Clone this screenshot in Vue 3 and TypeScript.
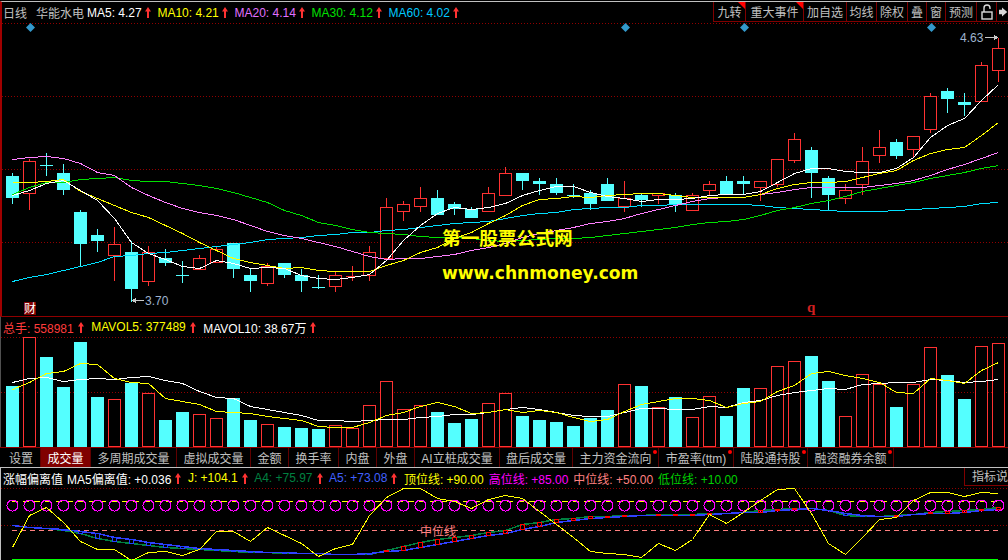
<script setup lang="ts">
type Candle = [kind: 'c' | 'r', hi: number, top: number, bot: number, lo: number]

interface Legend {
  label: string
  value: string
  color: string
}

const candles: Candle[] = [
  ['c', 173, 176, 198, 204], ['r', 159, 161, 193, 210], ['c', 153, 165, 165, 176], ['c', 164, 173, 190, 195],
  ['c', 210, 212, 244, 266], ['c', 229, 235, 241, 252], ['r', 227, 244, 255, 281], ['c', 241, 252, 289, 302],
  ['r', 246, 252, 281, 286], ['c', 249, 258, 263, 266], ['c', 261, 275, 275, 283], ['r', 255, 258, 269, 269],
  ['r', 246, 249, 262, 262], ['c', 243, 243, 269, 278], ['c', 269, 275, 281, 292], ['r', 263, 266, 283, 286],
  ['c', 263, 263, 275, 278], ['c', 269, 275, 281, 292], ['c', 275, 287, 287, 289], ['r', 272, 275, 286, 292],
  ['r', 266, 276, 276, 281], ['r', 246, 252, 275, 281], ['r', 198, 207, 258, 258], ['r', 201, 204, 211, 221],
  ['r', 187, 198, 206, 212], ['c', 190, 198, 215, 215], ['c', 202, 204, 209, 215], ['c', 207, 209, 218, 218],
  ['r', 187, 193, 211, 211], ['r', 167, 173, 195, 195], ['c', 173, 173, 181, 190], ['c', 178, 181, 184, 195],
  ['c', 178, 184, 193, 195], ['c', 184, 195, 195, 198], ['c', 190, 193, 204, 210], ['c', 178, 184, 201, 201],
  ['r', 181, 198, 206, 212], ['c', 193, 195, 200, 207], ['r', 193, 193, 195, 204], ['c', 193, 195, 205, 212],
  ['r', 193, 195, 210, 210], ['r', 181, 184, 190, 195], ['c', 176, 181, 194, 194], ['c', 176, 181, 184, 195],
  ['r', 181, 181, 187, 201], ['r', 159, 159, 184, 187], ['r', 133, 139, 160, 163], ['c', 147, 150, 173, 198],
  ['c', 176, 178, 195, 210], ['r', 184, 190, 198, 204], ['r', 147, 161, 184, 195], ['r', 130, 147, 155, 163],
  ['c', 139, 142, 156, 159], ['r', 136, 136, 149, 158], ['r', 93, 96, 129, 133], ['c', 88, 91, 99, 113],
  ['c', 93, 102, 105, 116], ['r', 62, 65, 101, 101], ['r', 38, 48, 70, 82]
]

const volumes = [
  386, 337, 357, 387, 342, 397, 399, 383, 393, 420, 412, 414, 418, 398, 420, 424, 427, 428, 429, 425,
  428, 405, 381, 409, 405, 412, 423, 419, 403, 393, 416, 420, 422, 426, 418, 410, 384, 386, 407, 397,
  417, 396, 416, 388, 388, 366, 361, 356, 381, 416, 374, 384, 407, 384, 347, 375, 399, 346, 343
]

const mainLines = [
  { color: '#00e0ff', ys: [281, 277, 274, 270, 266, 262, 256, 255, 253, 252, 250, 248, 246, 244, 242, 239, 238, 237, 235, 234, 232, 232, 230, 229, 227, 225, 223, 222, 221, 218, 215, 213, 212, 209, 208, 207, 207, 205, 205, 204, 204, 204, 204, 204, 205, 207, 208, 209, 210, 211, 211, 211, 210, 209, 208, 207, 206, 203, 202] },
  { color: '#00e000', ys: [194, 187, 182, 182, 179, 178, 177, 180, 181, 181, 183, 185, 188, 192, 197, 202, 210, 215, 222, 225, 229, 232, 233, 234, 236, 237, 237, 238, 240, 241, 240, 239, 238, 238, 237, 235, 233, 231, 229, 227, 224, 222, 221, 219, 215, 210, 207, 203, 200, 196, 191, 188, 185, 182, 178, 175, 172, 168, 165] },
  { color: '#ff80ff', ys: [159, 157, 156, 158, 163, 172, 175, 187, 195, 202, 208, 212, 215, 219, 225, 231, 235, 238, 242, 246, 251, 256, 259, 258, 258, 256, 254, 250, 247, 243, 237, 233, 230, 227, 223, 221, 218, 213, 209, 205, 201, 198, 197, 197, 194, 192, 189, 187, 187, 187, 187, 185, 183, 180, 175, 169, 164, 158, 152] },
  { color: '#ffff00', ys: [182, 182, 181, 179, 191, 198, 205, 212, 217, 225, 233, 242, 250, 258, 262, 265, 268, 267, 270, 271, 271, 271, 265, 260, 252, 247, 238, 232, 223, 215, 205, 199, 198, 196, 197, 195, 194, 193, 193, 195, 197, 197, 197, 197, 194, 188, 184, 182, 182, 181, 177, 173, 170, 160, 153, 149, 147, 135, 122] },
  { color: '#ffffff', ys: [195, 190, 183, 180, 190, 200, 218, 242, 253, 259, 266, 268, 260, 263, 268, 267, 268, 275, 278, 279, 277, 274, 260, 240, 225, 213, 207, 209, 207, 203, 195, 190, 186, 186, 192, 196, 198, 201, 199, 199, 198, 195, 194, 194, 191, 182, 173, 168, 168, 171, 172, 172, 168, 157, 137, 125, 118, 100, 84] }
]

const volWhite = [382, 378, 377, 381, 379, 378, 379, 377, 376, 380, 383, 391, 397, 398, 406, 409, 412, 415, 420, 420, 421, 420, 419, 419, 417, 416, 414, 414, 412, 409, 407, 409, 412, 415, 416, 416, 412, 408, 408, 409, 409, 406, 407, 402, 400, 395, 392, 390, 388, 389, 384, 383, 382, 382, 379, 380, 382, 381, 379]
const volYellow = [389, 382, 373, 371, 363, 364, 378, 382, 383, 398, 401, 404, 411, 412, 413, 416, 418, 420, 426, 427, 427, 422, 415, 412, 406, 402, 406, 413, 412, 409, 412, 410, 412, 417, 421, 419, 411, 404, 401, 398, 398, 400, 407, 403, 401, 391, 385, 373, 371, 375, 378, 382, 392, 393, 378, 380, 383, 370, 362]

const jLine = [547, 515, 507, 522, 541, 549, 549, 560, 552, 551, 555, 549, 531, 531, 541, 527, 535, 543, 556, 548, 544, 515, 497, 488, 488, 498, 501, 508, 499, 495, 498, 511, 524, 537, 551, 553, 554, 557, 543, 550, 539, 514, 523, 512, 500, 489, 488, 513, 543, 554, 537, 519, 517, 500, 492, 492, 496, 492, 493]
const a4Line = [525, 527, 528, 530, 533, 538, 541, 543, 545, 547, 548, 549, 550, 551, 552, 552, 553, 553, 553, 554, 554, 554, 550, 546, 542, 539, 537, 535, 532, 530, 524, 522, 519, 518, 516, 516, 515, 515, 514, 514, 514, 513, 513, 512, 510, 509, 508, 508, 510, 515, 516, 516, 515, 514, 512, 511, 510, 509, 507]
const a5Line = [525, 527, 528, 529, 531, 533, 537, 539, 542, 544, 546, 548, 549, 550, 551, 552, 552, 553, 553, 554, 554, 553, 551, 550, 547, 544, 541, 538, 535, 533, 529, 526, 522, 520, 518, 517, 516, 515, 515, 515, 515, 514, 513, 512, 512, 510, 509, 508, 510, 513, 515, 516, 516, 514, 513, 513, 512, 510, 509]

const diamonds = [30.5, 625.5, 744.5, 931.5]

const mainLegend: Legend[] = [
  { label: 'MA5:', value: '4.27', color: '#ffffff' },
  { label: 'MA10:', value: '4.21', color: '#ffff00' },
  { label: 'MA20:', value: '4.14', color: '#e070ff' },
  { label: 'MA30:', value: '4.12', color: '#00e000' },
  { label: 'MA60:', value: '4.02', color: '#00c8ff' }
]

const volLegend: Legend[] = [
  { label: '总手:', value: '558981', color: '#ff3c3c' },
  { label: 'MAVOL5:', value: '377489', color: '#ffff00' },
  { label: 'MAVOL10:', value: '38.67万', color: '#ffffff' }
]

const indicatorLegend: Legend[] = [
  { label: 'MA5偏离值:', value: '+0.036', color: '#ffffff' },
  { label: 'J:', value: '+104.1', color: '#ffff00' },
  { label: 'A4:', value: '+75.97', color: '#008040' },
  { label: 'A5:', value: '+73.08', color: '#4060ff' }
]

const indicatorPlain: Legend[] = [
  { label: '顶位线:', value: '+90.00', color: '#ffff00' },
  { label: '高位线:', value: '+85.00', color: '#ff00ff' },
  { label: '中位线:', value: '+50.00', color: '#ff8080' },
  { label: '低位线:', value: '+10.00', color: '#00d000' }
]

const tools = [
  { text: '九转', width: 32, flag: true },
  { text: '重大事件', width: 58, flag: true },
  { text: '加自选', width: 43 },
  { text: '均线', width: 30 },
  { text: '除权', width: 31 },
  { text: '叠', width: 19 },
  { text: '窗', width: 19 },
  { text: '预测', width: 31 }
]

const tabs = [
  { text: '设置', width: 39 },
  { text: '成交量', width: 50, active: true },
  { text: '多周期成交量', width: 86 },
  { text: '虚拟成交量', width: 74 },
  { text: '金额', width: 38 },
  { text: '换手率', width: 50 },
  { text: '内盘', width: 38 },
  { text: '外盘', width: 38 },
  { text: 'AI立桩成交量', width: 85 },
  { text: '盘后成交量', width: 73 },
  { text: '主力资金流向', width: 86, dot: true },
  { text: '市盈率(ttm)', width: 75, dot: true },
  { text: '陆股通持股', width: 74, dot: true },
  { text: '融资融券余额', width: 86, dot: true }
]

function xAt(i: number): number {
  return 12.5 + 17 * i
}

function points(ys: number[]): string {
  return ys.map((y, i) => `${xAt(i)},${y + 0.5}`).join(' ')
}

function candleColor(kind: 'c' | 'r'): string {
  return kind === 'c' ? '#54ffff' : '#ff3232'
}
</script>

<template>
  <div class="screen">
    <section class="pane main-pane">
      <header class="legend-row main-head">
        <span class="title">日线</span>
        <span class="title name">华能水电</span>
        <span v-for="item in mainLegend" :key="item.label" class="legend-item" :style="{ color: item.color }">
          <span>{{ item.label }} {{ item.value }}</span>
          <svg class="up" width="6" height="11" viewBox="0 0 6 11"><path d="M3 0 6 4.500H4V11H2V4.500H0Z" /></svg>
        </span>
        <div class="tools">
          <div v-for="tool in tools" :key="tool.text" class="tool" :style="{ width: tool.width + 'px' }">
            {{ tool.text }}
            <i v-if="tool.flag" class="flag"></i>
          </div>
          <div class="tool lock">
            <svg width="12" height="16" viewBox="0 0 12 16" fill="none" stroke="#d8d8d8" stroke-width="1.4">
              <path d="M3 8V4a3 3 0 0 1 6 0v1" />
              <rect x="1" y="8" width="10" height="7" />
            </svg>
          </div>
          <div class="tool next">
            <svg width="12" height="14" viewBox="0 0 12 14"><path d="M0 4H4V1L11 7 4 13V10H0Z" fill="#d8d8d8" /></svg>
          </div>
        </div>
      </header>
      <svg class="chart" width="1006" height="293" viewBox="2 23 1006 293" shape-rendering="crispEdges">
        <line v-for="y in [23.5, 96.5, 169.5, 242.5]" :key="y" x1="2" x2="1008" :y1="y" :y2="y" class="grid" />
        <path
          v-for="x in diamonds"
          :key="x"
          :d="`M${x} 23l4.500 4.500-4.500 4.500-4.500-4.500Z`"
          fill="#3399cc"
          shape-rendering="auto"
        />
        <g v-for="(c, i) in candles" :key="i" :stroke="candleColor(c[0])">
          <line :x1="xAt(i)" :x2="xAt(i)" :y1="c[1]" :y2="c[4]" />
          <line v-if="c[2] === c[3]" :x1="xAt(i) - 6.5" :x2="xAt(i) + 6.5" :y1="c[2] + 0.5" :y2="c[2] + 0.5" />
          <rect v-else-if="c[0] === 'c'" :x="xAt(i) - 6.5" :y="c[2]" width="13" :height="c[3] - c[2]" fill="#54ffff" stroke="none" />
          <rect v-else :x="xAt(i) - 6" :y="c[2] + 0.5" width="12" :height="c[3] - c[2]" fill="#000" />
        </g>
        <polyline v-for="line in mainLines" :key="line.color" :points="points(line.ys)" fill="none" :stroke="line.color" />

        <path d="M132 300.500l4-3v2.500h8v1h-8v2.500Z" fill="#c8c8c8" />
        <text x="145" y="304.500" class="price">3.70</text>
        <text x="960" y="41.500" class="price">4.63</text>
        <path d="M985 37h9v-2.500l4 3-4 3V38h-9Z" fill="#c8c8c8" />

        <rect x="24" y="302" width="12" height="13" fill="#800000" />
        <text x="30" y="313" class="cai">财</text>
        <text x="807" y="312" class="mark-q">q</text>

        <text x="442" y="245" class="stamp">第一股票公式网</text>
        <text x="442" y="279" class="stamp site">www.chnmoney.com</text>
      </svg>
    </section>

    <section class="pane vol-pane">
      <header class="legend-row vol-head">
        <span v-for="item in volLegend" :key="item.label" class="legend-item" :style="{ color: item.color }">
          <span>{{ item.label }} {{ item.value }}</span>
          <svg class="up" width="6" height="11" viewBox="0 0 6 11"><path d="M3 0 6 4.500H4V11H2V4.500H0Z" /></svg>
        </span>
      </header>
      <svg class="chart" width="1007" height="110" viewBox="1 337 1007 110" shape-rendering="crispEdges">
        <line v-for="y in [337.5, 392.5]" :key="y" x1="1" x2="1008" :y1="y" :y2="y" class="grid" />
        <template v-for="(v, i) in volumes" :key="i">
          <rect v-if="candles[i][0] === 'c'" :x="xAt(i) - 6.5" :y="v" width="13" :height="447 - v" fill="#54ffff" />
          <rect v-else :x="xAt(i) - 6" :y="v + 0.5" width="12" :height="446 - v" fill="#000" stroke="#ff3232" />
        </template>
        <polyline :points="points(volWhite)" fill="none" stroke="#ffffff" />
        <polyline :points="points(volYellow)" fill="none" stroke="#ffff00" />
      </svg>
    </section>

    <nav class="tabs">
      <div
        v-for="tab in tabs"
        :key="tab.text"
        class="tab"
        :class="{ active: tab.active }"
        :style="{ width: tab.width + 'px' }"
      >
        {{ tab.text }}
        <i v-if="tab.dot" class="dot"></i>
      </div>
    </nav>

    <section class="pane ind-pane">
      <header class="legend-row ind-head">
        <span class="ind-title">涨幅偏离值</span>
        <span v-for="item in indicatorLegend" :key="item.label" class="legend-item" :style="{ color: item.color }">
          <span>{{ item.label }} {{ item.value }}</span>
          <svg class="up" width="6" height="11" viewBox="0 0 6 11"><path d="M3 0 6 4.500H4V11H2V4.500H0Z" /></svg>
        </span>
        <span v-for="item in indicatorPlain" :key="item.label" class="legend-item plain" :style="{ color: item.color }">
          {{ item.label }} {{ item.value }}
        </span>
        <div class="explain">指标说</div>
      </header>
      <svg class="chart" width="1007" height="72" viewBox="1 488 1007 72" shape-rendering="crispEdges">
        <line v-for="y in [488.5, 525.5]" :key="y" x1="1" x2="1008" :y1="y" :y2="y" class="grid" />
        <line x1="12" x2="998" y1="501.500" y2="501.500" stroke="#ffff00" stroke-dasharray="6 5" />
        <line x1="12" x2="998" y1="530.500" y2="530.500" stroke="#ff8080" stroke-dasharray="5 4" />
        <line x1="12" x2="998" y1="559.500" y2="559.500" stroke="#00ff00" />
        <circle v-for="(v, i) in jLine" :key="i" :cx="xAt(i)" cy="505.500" r="5.500" fill="none" stroke="#ff00ff" />
        <polyline :points="points(a4Line)" fill="none" stroke="#008040" stroke-width="1.500" />
        <polyline :points="points(a5Line)" fill="none" stroke="#3040ff" stroke-width="1.500" />
        <rect
          v-for="(a, i) in a4Line"
          :key="i"
          :x="xAt(i) - 2"
          :y="Math.min(a, a5Line[i]) + 0.5"
          width="4"
          :height="Math.abs(a - a5Line[i])"
          fill="none"
          :stroke="a < a5Line[i] ? '#ff0000' : '#2040ff'"
        />
        <polyline :points="points(jLine)" fill="none" stroke="#ffff00" />
        <text x="438" y="536" class="mid-label">中位线</text>
      </svg>
    </section>
  </div>
</template>

<style scoped>
.screen {
  width: 1008px;
  height: 560px;
  overflow: hidden;
  background: #000;
  font-family: "Liberation Sans", "Noto Sans CJK SC", sans-serif;
  font-size: 12px;
  color: #c0c0c0;
  border-top: 1px solid #000;
  box-sizing: border-box;
}

.pane {
  display: block;
}

.main-pane {
  border-top: 1px solid #c0c0c0;
  border-left: 2px solid #a00000;
}

.vol-pane {
  border-top: 1px solid #900000;
  border-left: 1px solid #505050;
}

.ind-pane {
  border-top: 1px solid #c0c0c0;
  border-left: 1px solid #c0c0c0;
}

.chart {
  display: block;
}

.legend-row {
  display: flex;
  align-items: center;
  white-space: nowrap;
}

.main-head {
  height: 21px;
  padding-left: 1px;
}

.main-head .legend-item {
  gap: 3px;
  margin-right: 6.700px;
}

.vol-head {
  height: 20px;
  padding-left: 2px;
  gap: 7.500px;
}

.ind-head {
  height: 20px;
  padding-left: 2px;
  gap: 6.500px;
  position: relative;
}

.title {
  width: 33px;
}

.name {
  width: 51px;
}

.legend-item {
  display: flex;
  align-items: center;
  gap: 4px;
}

.ind-title {
  color: #fff;
  margin-right: -2.500px;
}

.ind-head .legend-item.plain {
  gap: 0;
  margin-right: -1.500px;
}

.up {
  fill: #ff3232;
  flex: none;
}

.tools {
  display: flex;
  margin-left: auto;
  height: 19px;
  margin-top: -1px;
  border-bottom: 1px solid #800000;
}

.tool {
  position: relative;
  display: flex;
  align-items: center;
  justify-content: center;
  border-left: 1px solid #800000;
  box-sizing: border-box;
}

.flag {
  position: absolute;
  top: 0;
  right: 0;
  width: 0;
  height: 0;
  border-top: 7px solid #ff0000;
  border-left: 7px solid transparent;
}

.lock {
  width: 20px;
}

.next {
  width: 12px;
  justify-content: flex-start;
  padding-left: 2px;
}

.grid {
  stroke: #900000;
  stroke-dasharray: 1 2;
}

.price {
  fill: #9fb4cf;
  font-size: 12px;
}

.cai {
  fill: #fff;
  font-size: 12px;
  text-anchor: middle;
}

.mark-q {
  fill: #d02020;
  font-family: "Liberation Serif", serif;
  font-size: 15px;
  font-weight: 700;
}

.stamp {
  fill: #ffff00;
  font-size: 18.700px;
  font-weight: 700;
}

.site {
  font-family: "DejaVu Sans", sans-serif;
  font-size: 17.100px;
}

.mid-label {
  fill: #ff8080;
  font-size: 12px;
  text-anchor: middle;
}

.tabs {
  display: flex;
  height: 19px;
  border-top: 1px solid #900000;
  padding-left: 2px;
}

.tab {
  position: relative;
  display: flex;
  align-items: center;
  justify-content: center;
  white-space: nowrap;
  border-right: 1px solid #600000;
  box-sizing: border-box;
}

.tab.active {
  background: #800000;
  color: #fff;
}

.dot {
  position: absolute;
  top: 2px;
  right: 1px;
  width: 4px;
  height: 4px;
  border-radius: 50%;
  background: #ff0000;
}

.explain {
  position: absolute;
  right: 0;
  top: 0;
  width: 44px;
  height: 18px;
  line-height: 18px;
  padding-left: 7px;
  box-sizing: border-box;
  overflow: hidden;
  color: #c0c0c0;
  border-left: 1px solid #800000;
  border-bottom: 1px solid #800000;
}
</style>

<style>
html,
body {
  margin: 0;
  background: #000;
  overflow: hidden;
}
</style>
